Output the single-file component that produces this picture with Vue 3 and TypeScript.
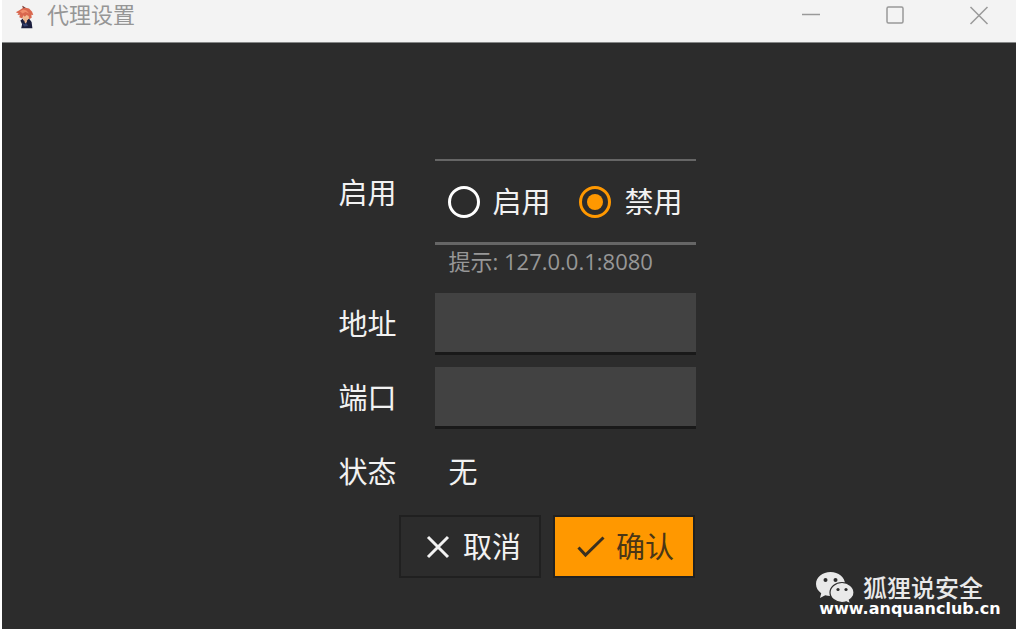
<script setup lang="ts">
import { ref } from 'vue'

type Mode = 'on' | 'off'

const modes: { value: Mode; label: string }[] = [
  { value: 'on', label: '启用' },
  { value: 'off', label: '禁用' },
]
const mode = ref<Mode>('off')
const host = ref('')
const port = ref('')
const status = ref('无')

function reset() {
  mode.value = 'off'
  host.value = ''
  port.value = ''
}
</script>

<template>
  <div class="window">
    <header class="titlebar">
      <svg class="app-icon" viewBox="0 0 20 24" aria-hidden="true">
        <path d="M5.4 15.6 8 13.6h6l2.6 3.4.8 6.2H6.2l.9-4z" fill="#1b1e3d" />
        <path d="m7 18 3 1.2 1-2.2 2 4-4 .6z" fill="#34406e" />
        <path d="M7 9.5h7l.4 3.6-2.6 2.7-3.6-.6z" fill="#f3bd93" />
        <path d="m8.6 13.2 3-.8.4 4.6-1.9 1.4z" fill="#eab58f" />
        <path d="m.8 7.2 3.6-1.9L7.8 3 7.3.8l3.3 1.9 3.5.8 3 3.2 1.2 3.2-1.9-.2.3 3-2.6 1.6-.5-3.2-2.1-1-1.7 1.7-1.5-1.5-1 3.3-3-1.4.6-2.4-2.5.2 1.2-1.5z" fill="#d9674e" />
        <path d="m5 6.2 3.4-1.7 3 .9 2.8 3-3.8-1.5-2.8 1.5z" fill="#f08e6c" />
        <path d="m7.3.8 3.3 1.9-2.4.6z" fill="#6e4a4c" />
      </svg>
      <h1 class="title">代理设置</h1>
      <div class="controls">
        <button type="button" aria-label="最小化">
          <svg viewBox="0 0 20 20"><path d="M1 9.500h18" /></svg>
        </button>
        <button type="button" aria-label="最大化">
          <svg viewBox="0 0 20 20"><rect x="2" y="2" width="16" height="16" rx="1.500" /></svg>
        </button>
        <button type="button" aria-label="关闭">
          <svg viewBox="0 0 20 20"><path d="m1.500 2 17 17m0-17-17 17" /></svg>
        </button>
      </div>
    </header>

    <main class="body">
      <form class="form" @submit.prevent>
        <span id="mode-label" class="label label-top">启用</span>
        <div class="mode">
          <div class="radios" role="radiogroup" aria-labelledby="mode-label">
            <label v-for="m in modes" :key="m.value" class="radio">
              <input v-model="mode" type="radio" name="mode" :value="m.value" />
              <span>{{ m.label }}</span>
            </label>
          </div>
          <p class="hint">提示: 127.0.0.1:8080</p>
        </div>

        <label class="label" for="host">地址</label>
        <input id="host" v-model="host" class="field" type="text" />

        <label class="label" for="port">端口</label>
        <input id="port" v-model="port" class="field" type="text" />

        <span class="label">状态</span>
        <output class="status">{{ status }}</output>

        <div class="actions">
          <button type="button" class="btn" @click="reset">
            <svg viewBox="0 0 24 24"><path d="m2 2 20 20m0-20L2 22" /></svg>
            取消
          </button>
          <button type="submit" class="btn primary">
            <svg class="check" viewBox="0 0 28 24"><path d="m1.500 12.500 7 7.500L26.500 2.500" /></svg>
            确认
          </button>
        </div>
      </form>
    </main>

    <aside class="credit">
      <div class="account">
        <svg viewBox="0 0 38 32" aria-hidden="true">
          <path d="M14.500 0C6.500 0 0 5.200 0 12c0 3.800 2 7 5.200 9.200L4 26l5.200-2.800c1.700.5 3.400.8 5.300.8 8 0 14.500-5.200 14.500-12S22.500 0 14.500 0z" fill="#e9e9e9" />
          <circle cx="9.500" cy="8" r="2" fill="#2c2c2c" />
          <circle cx="19.500" cy="8" r="2" fill="#2c2c2c" />
          <path d="M26 10.500c-6.600 0-12 4.500-12 10s5.400 10 12 10c1.500 0 3-.2 4.300-.7l4.300 2-1.200-3.800c2.800-1.800 4.600-4.500 4.600-7.500 0-5.500-5.400-10-12-10z" fill="#e9e9e9" stroke="#2c2c2c" stroke-width="1.200" />
          <circle cx="22" cy="17.500" r="1.600" fill="#2c2c2c" />
          <circle cx="30" cy="17.500" r="1.600" fill="#2c2c2c" />
        </svg>
        <span>狐狸说安全</span>
      </div>
      <div class="site">www.anquanclub.cn</div>
    </aside>
  </div>
</template>

<style>
body {
  margin: 0;
  background: #fff;
}
</style>

<style scoped>
.window {
  position: relative;
  box-sizing: border-box;
  display: flex;
  flex-direction: column;
  min-height: 100vh;
  padding-left: 2px;
  font-family: "Open Sans", "Noto Sans CJK SC", sans-serif;
  color: #f2f2f2;
}

.titlebar {
  display: flex;
  align-items: center;
  padding: 0 0 12px 13px;
  height: 30px;
  background: #f3f3f3;
  border-bottom: 1px solid #858787;
}

.app-icon {
  width: 20px;
  height: 24px;
  margin-top: 4px;
}

.title {
  flex: 1;
  margin: 0 0 0 12px;
  font-size: 22px;
  line-height: 28px;
  padding-bottom: 2px;
  font-weight: 400;
  color: #969696;
}

.controls {
  display: flex;
  gap: 10px;
}

.controls button {
  display: flex;
  align-items: center;
  justify-content: center;
  width: 74px;
  height: 30px;
  padding: 0;
  border: 0;
  background: none;
}

.controls svg {
  width: 20px;
  height: 20px;
  fill: none;
  stroke: #999;
  stroke-width: 1.5;
}

.body {
  flex: 1;
  display: flex;
  justify-content: center;
  align-items: flex-start;
  padding-top: 116px;
  background: #2c2c2c;
}

.form {
  display: grid;
  grid-template-columns: 96px 261px;
  row-gap: 12px;
  padding-left: 16px;
  font-size: 29px;
  line-height: 40px;
}

.label {
  align-self: center;
}

.label-top {
  align-self: start;
  padding-top: 14px;
}

.radios {
  box-sizing: border-box;
  display: flex;
  align-items: center;
  justify-content: space-between;
  height: 86px;
  padding: 0 13px;
  border-top: 2px solid #666;
  border-bottom: 3px solid #666;
}

.radio {
  display: flex;
  align-items: center;
  gap: 13px;
}

.radio input {
  appearance: none;
  display: grid;
  place-items: center;
  width: 32px;
  height: 32px;
  margin: 0;
  border: 3px solid #fff;
  border-radius: 50%;
}

.radio input:checked {
  border-color: #ff9800;
}

.radio input:checked::before {
  content: "";
  width: 16px;
  height: 16px;
  border-radius: 50%;
  background: #ff9800;
}

.hint {
  margin: 0;
  padding: 0 0 4px 14px;
  font-size: 22px;
  line-height: 32px;
  color: #979797;
}

.field {
  box-sizing: border-box;
  width: 100%;
  height: 62px;
  padding: 0 14px;
  border: 0;
  border-bottom: 3px solid #191919;
  background: #424242;
  color: inherit;
  font: inherit;
}

.status {
  padding: 11px 14px;
}

.actions {
  grid-column: 1 / -1;
  display: flex;
  justify-content: flex-end;
  gap: 12px;
  padding-right: 1px;
}

.btn {
  box-sizing: border-box;
  display: flex;
  align-items: center;
  justify-content: center;
  gap: 13px;
  width: 142px;
  height: 63px;
  padding: 0 0 0 8px;
  border: 2px solid #202020;
  background: #2c2c2c;
  color: #f2f2f2;
  font: inherit;
}

.btn svg {
  width: 24px;
  height: 24px;
  fill: none;
  stroke: currentColor;
  stroke-width: 3;
}

.btn .check {
  width: 28px;
}

.primary {
  gap: 11px;
  padding-left: 4px;
  background: #ff9800;
  color: #4a3616;
}

.primary svg {
  stroke: #3a3020;
}

.credit {
  position: absolute;
  right: 12px;
  bottom: 12px;
  width: 188px;
}

.account {
  display: flex;
  align-items: flex-start;
  gap: 9px;
  height: 29px;
  font-size: 24px;
  line-height: 24px;
  font-weight: 500;
  color: #e9e9e9;
}

.account svg {
  flex: none;
  width: 38px;
  height: 32px;
}

.account span {
  padding-top: 4px;
}

.site {
  position: relative;
  text-align: center;
  font: bold 16px/16px "DejaVu Sans", sans-serif;
  color: #fff;
}
</style>
